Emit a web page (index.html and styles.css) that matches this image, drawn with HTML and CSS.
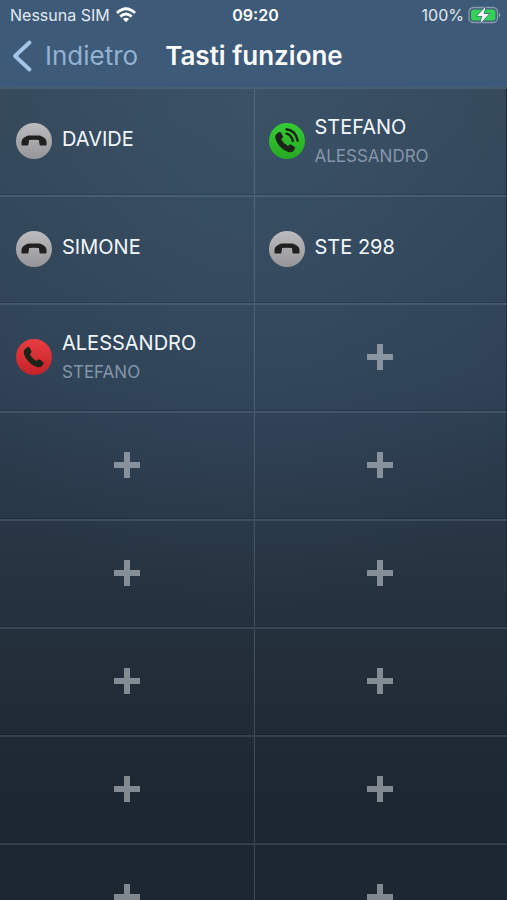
FILE: index.html
```html
<!DOCTYPE html>
<html lang="it">
<head>
<meta charset="utf-8">
<meta name="viewport" content="width=device-width, initial-scale=1">
<title>Tasti funzione</title>
<link rel="stylesheet" href="styles.css">
</head>
<body>
<svg class="defs" aria-hidden="true">
  <defs>
    <linearGradient id="gray" x1="0" y1="0" x2="0" y2="1"><stop offset="0" stop-color="#bcbcbe"/><stop offset="1" stop-color="#969698"/></linearGradient>
    <linearGradient id="green" x1="0" y1="0" x2="0" y2="1"><stop offset="0" stop-color="#35cc35"/><stop offset="1" stop-color="#27a822"/></linearGradient>
    <linearGradient id="red" x1="0" y1="0" x2="0" y2="1"><stop offset="0" stop-color="#e83c40"/><stop offset="1" stop-color="#c3232a"/></linearGradient>
    <symbol id="idle" viewBox="0 0 38 38">
      <circle cx="19" cy="19" r="18" fill="url(#gray)"/>
      <path d="M6.500 22.800v-3.300q.3-2.400 2.700-3.900l1.400-.9q1.700-1 3.700-1.100h9.400q2 .1 3.700 1.100l1.400.9q2.400 1.500 2.700 3.900v3.300q0 .7-.7.7h-5.300q-.8 0-.9-.8l-.7-4.600q-4.900-.9-9.800 0l-.7 4.600q-.1.800-.9.800H7.200q-.7 0-.7-.7z" fill="#202020"/>
    </symbol>
    <symbol id="ringing" viewBox="0 0 38 38">
      <circle cx="19" cy="19" r="18" fill="url(#green)"/>
      <path class="handset" d="M8.300 12.200l2.400-2q1.300-.9 2.200.3l2 3.400q.6 1.100-.4 2l-1.300 1.300q2.300 4.500 6.700 6.700l1.600-1.200q1-.8 2 0l3.100 2.400q1 .9.200 2l-1.800 2.300q-1.600 1.300-4.600.5C14 28 8.700 22 7.300 16q-.4-2.500 1-3.800z"/>
      <path class="waves" d="M18.500 11.600q5.300 1.400 6.300 7.400M18.500 7.300q9 1.200 11.200 11.400"/>
    </symbol>
    <symbol id="busy" viewBox="0 0 38 38">
      <circle cx="19" cy="19" r="18" fill="url(#red)"/>
      <path class="handset" transform="translate(1.500 -1)" d="M8.300 12.200l2.400-2q1.300-.9 2.200.3l2 3.400q.6 1.100-.4 2l-1.300 1.300q2.300 4.500 6.700 6.700l1.600-1.200q1-.8 2 0l3.100 2.400q1 .9.200 2l-1.800 2.300q-1.600 1.300-4.600.5C14 28 8.700 22 7.300 16q-.4-2.500 1-3.800z"/>
    </symbol>
    <symbol id="plus" viewBox="0 0 28 28"><path d="M11 1h6v10h10v6H17v10h-6V17H1v-6h10z" fill="#c4cad1" fill-opacity=".6"/></symbol>
  </defs>
</svg>
<header class="top">
  <div class="status">
    <span class="carrier">Nessuna SIM
      <svg class="wifi" viewBox="0 0 20 16" aria-label="Wi-Fi"><g fill="none" stroke="#fff" stroke-width="2.800"><path d="M1 6q9-8.400 18 0M4.300 9.600q5.700-5.200 11.400 0"/></g><path d="M6.900 12q3.100-2.700 6.200 0L10 15.200z" fill="#fff"/></svg>
    </span>
    <time class="clock">09:20</time>
    <span class="power">100%
      <svg class="battery" viewBox="0 0 33 18" aria-label="In carica"><rect x="1" y="1.500" width="28.500" height="15" rx="4.500" fill="none" stroke="#8b9bac" stroke-width="1.300"/><rect x="3" y="3.500" width="24.500" height="11" rx="2.500" fill="#32d158"/><path d="M31 6.700q2.800 2.200 0 4.500z" fill="#8b9bac"/><path d="M17.400 1L9 10h5.300l-2 7.200L21 7.900h-5.400z" fill="#fff" stroke="#3d5a78" stroke-width="1.200" paint-order="stroke"/></svg>
    </span>
  </div>
  <nav class="nav">
    <a class="back" href="#"><svg class="chevron" viewBox="0 0 20 32" aria-hidden="true"><path d="M17.500 2.500L3 16l14.500 13.500" fill="none" stroke="#a3c5e8" stroke-width="3.800" stroke-linecap="round" stroke-linejoin="round"/></svg>Indietro</a>
    <h1 class="title">Tasti funzione</h1>
  </nav>
</header>
<main class="keys">
  <button class="key"><svg class="state"><use href="#idle"/></svg><span class="label"><span class="name">DAVIDE</span></span></button>
  <button class="key"><svg class="state"><use href="#ringing"/></svg><span class="label two"><span class="name">STEFANO</span><span class="peer">ALESSANDRO</span></span></button>
  <button class="key"><svg class="state"><use href="#idle"/></svg><span class="label"><span class="name">SIMONE</span></span></button>
  <button class="key"><svg class="state"><use href="#idle"/></svg><span class="label"><span class="name">STE 298</span></span></button>
  <button class="key"><svg class="state"><use href="#busy"/></svg><span class="label two"><span class="name">ALESSANDRO</span><span class="peer">STEFANO</span></span></button>
  <button class="key empty" aria-label="Aggiungi"><svg class="plus"><use href="#plus"/></svg></button>
  <button class="key empty" aria-label="Aggiungi"><svg class="plus"><use href="#plus"/></svg></button>
  <button class="key empty" aria-label="Aggiungi"><svg class="plus"><use href="#plus"/></svg></button>
  <button class="key empty" aria-label="Aggiungi"><svg class="plus"><use href="#plus"/></svg></button>
  <button class="key empty" aria-label="Aggiungi"><svg class="plus"><use href="#plus"/></svg></button>
  <button class="key empty" aria-label="Aggiungi"><svg class="plus"><use href="#plus"/></svg></button>
  <button class="key empty" aria-label="Aggiungi"><svg class="plus"><use href="#plus"/></svg></button>
  <button class="key empty" aria-label="Aggiungi"><svg class="plus"><use href="#plus"/></svg></button>
  <button class="key empty" aria-label="Aggiungi"><svg class="plus"><use href="#plus"/></svg></button>
  <button class="key empty" aria-label="Aggiungi"><svg class="plus"><use href="#plus"/></svg></button>
  <button class="key empty" aria-label="Aggiungi"><svg class="plus"><use href="#plus"/></svg></button>
</main>
</body>
</html>
```
FILE: styles.css
```css
* { box-sizing: border-box; }

body {
  margin: 0;
  height: 100vh;
  display: flex;
  flex-direction: column;
  overflow: hidden;
  font-family: Inter, "Liberation Sans", sans-serif;
  color: #fff;
  background: #1e2833;
}

.defs { position: absolute; width: 0; height: 0; }

.top { flex: none; background: #3d5a78; }

.status {
  display: grid;
  grid-template-columns: 1fr auto 1fr;
  align-items: center;
  height: 29px;
  padding: 0 6px 0 10px;
  font-size: 16px;
  color: #e3e9f0;
}

.carrier, .power { display: flex; align-items: center; gap: 6px; }
.power { justify-content: flex-end; gap: 4px; }
.clock { font-weight: 600; color: #fff; }
.wifi { width: 20px; height: 16px; }
.battery { width: 33px; height: 18px; }

.nav {
  display: flex;
  align-items: center;
  gap: 27px;
  height: 58px;
  padding: 0 12px 5px;
}

.back {
  display: flex;
  align-items: center;
  gap: 13px;
  font-size: 26px;
  color: #94b2d2;
  text-decoration: none;
}

.chevron { width: 20px; height: 32px; }

.title { margin: 0; font-size: 26px; font-weight: 600; }

.keys {
  flex: 1;
  min-height: 0;
  overflow: hidden;
  display: grid;
  grid-template-columns: 1fr 1fr;
  grid-auto-rows: 108px;
  background:
    radial-gradient(ellipse 75% 65% at 50% 0, rgba(72, 105, 132, 0.35), transparent),
    linear-gradient(#344657, #2e4054 35%, #26323f 62%, #1e2833 85%, #1d2731);
  box-shadow: inset -1px 0 #1d2a37;
}

.key {
  display: flex;
  align-items: center;
  gap: 9px;
  padding: 0 15px 2px;
  border: 0;
  border-top: 2px solid rgba(140, 165, 180, 0.2);
  background: none;
  box-shadow: inset 0 -1px rgba(10, 20, 30, 0.2);
  font-family: inherit;
  color: #f2f8fd;
  text-align: left;
}

.key:nth-child(even) {
  padding-left: 14px;
  box-shadow: inset 1px 0 rgba(150, 175, 190, 0.25), inset 0 -1px rgba(10, 20, 30, 0.2);
}

.state { width: 38px; height: 38px; }

.handset { fill: #1c2419; }
.waves { fill: none; stroke: #1c2419; stroke-width: 2.400; stroke-linecap: round; }

.label { display: flex; flex-direction: column; gap: 4px; padding-bottom: 5px; }
.two { padding-bottom: 0; }
.name { font-size: 20px; line-height: 26px; }
.peer { font-size: 17px; line-height: 24px; color: #8595aa; }

.empty { justify-content: center; }
.plus { width: 28px; height: 28px; }
```
